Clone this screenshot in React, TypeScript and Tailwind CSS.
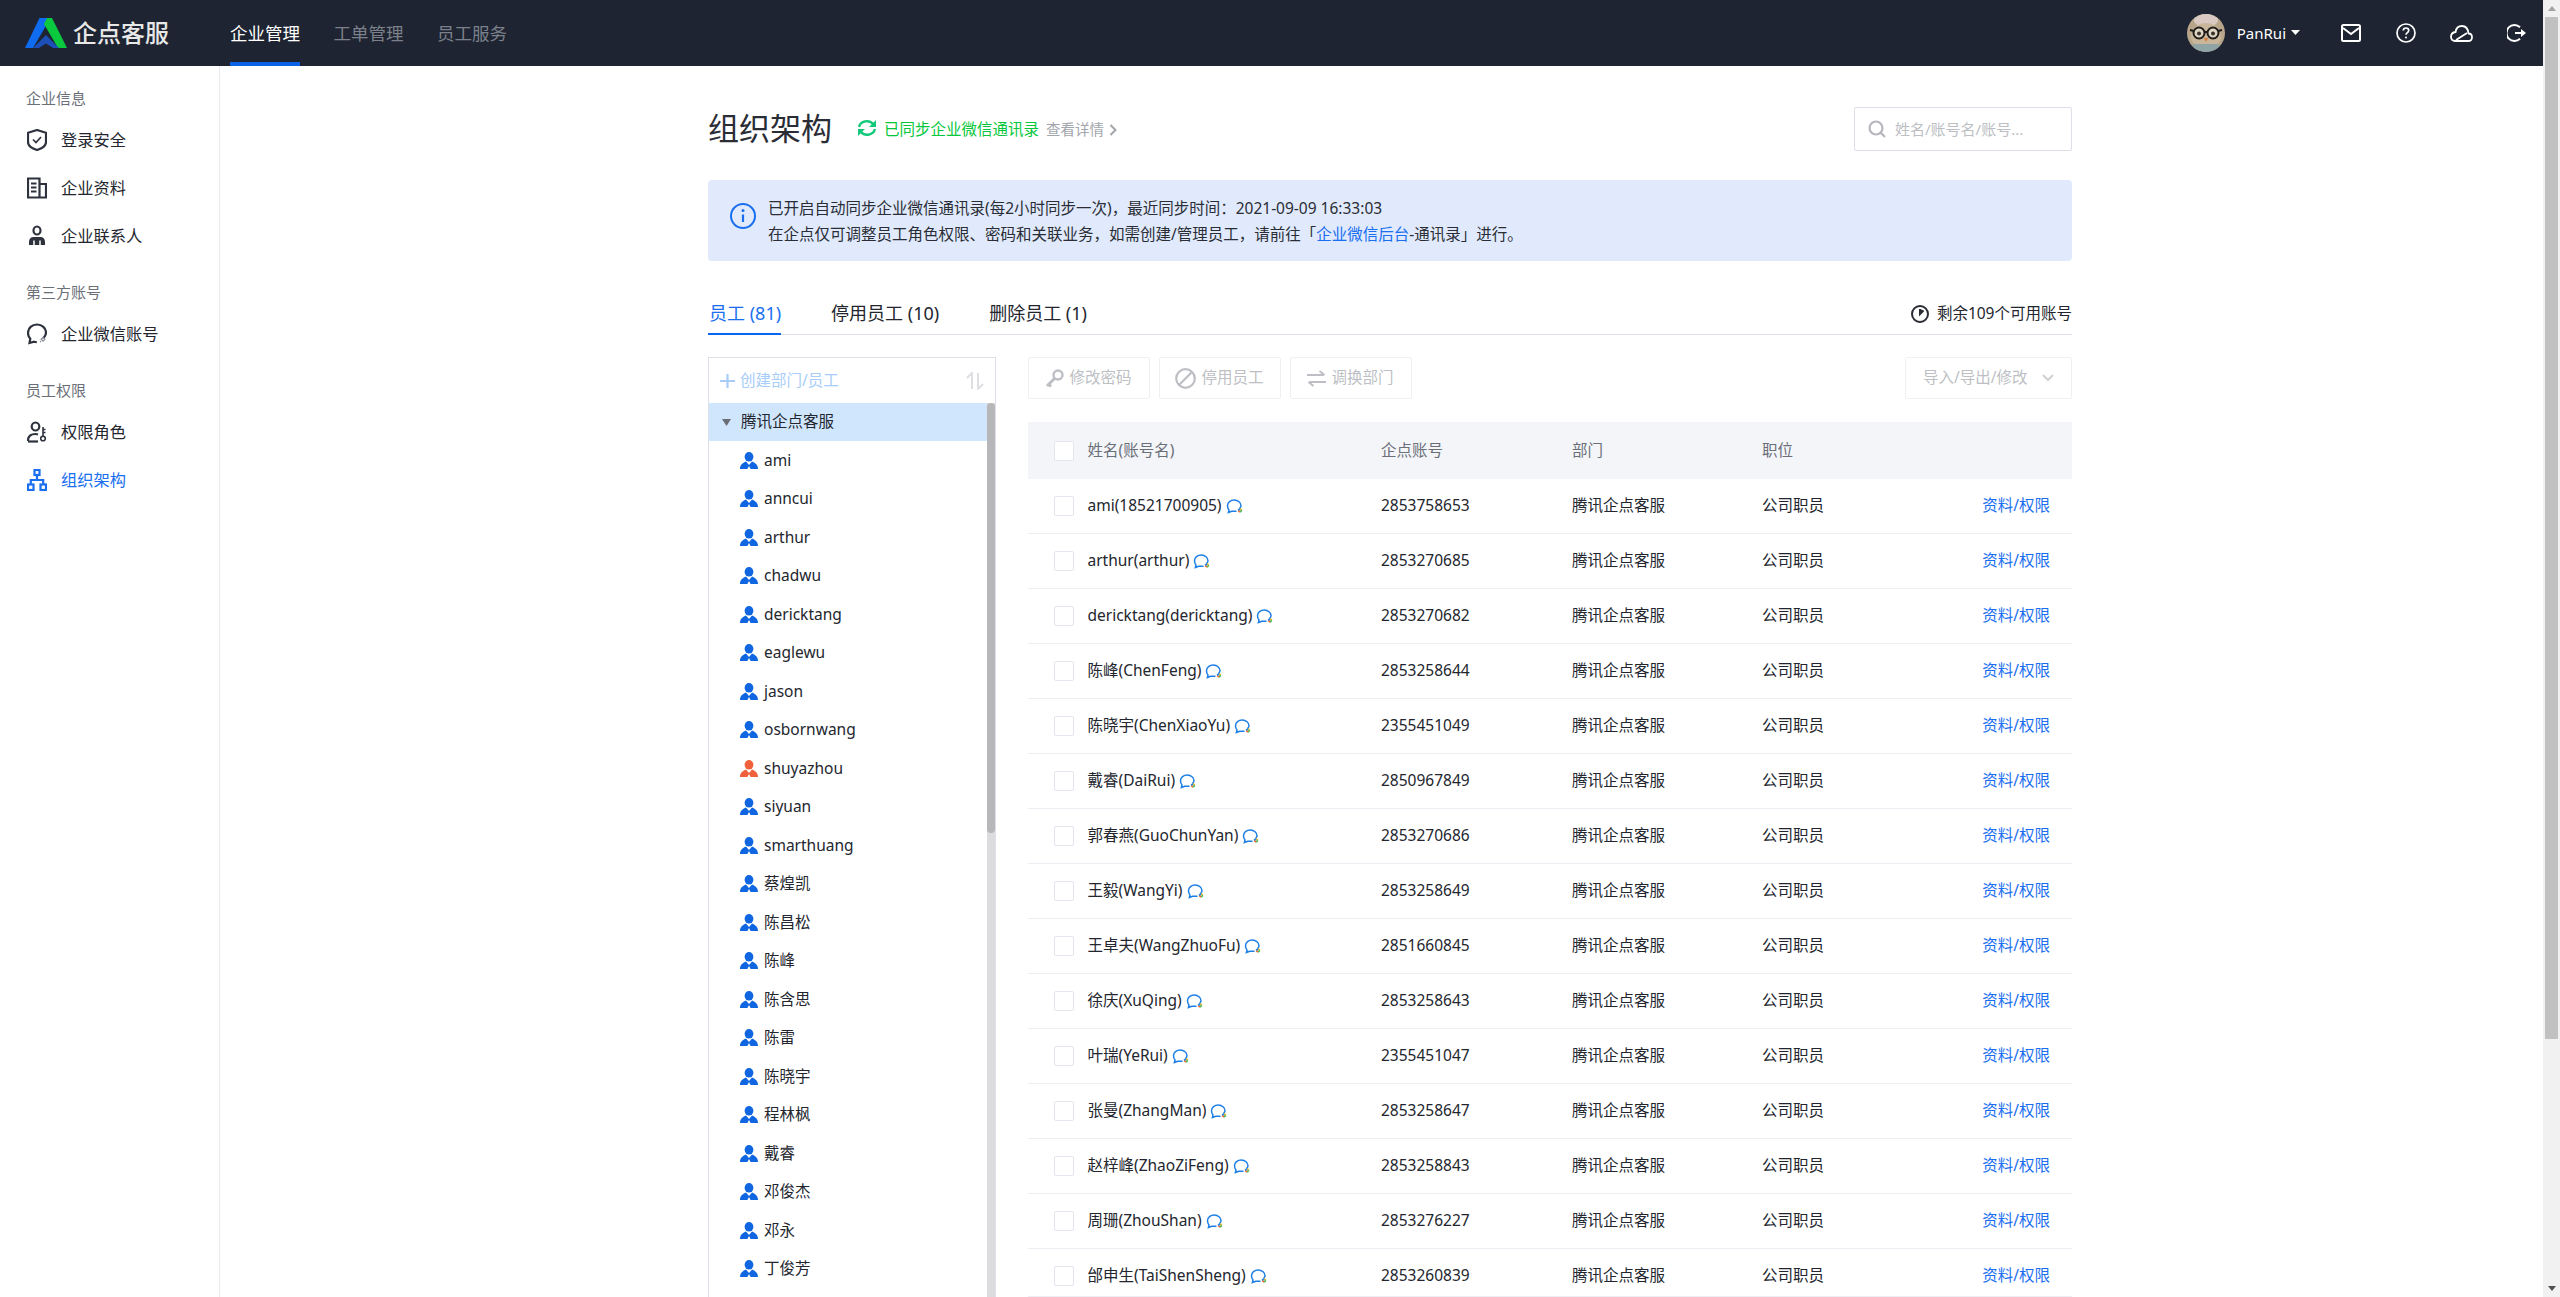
import React from "react";

const rows: [string, string][] = [
  ["ami(18521700905)", "2853758653"],
  ["arthur(arthur)", "2853270685"],
  ["dericktang(dericktang)", "2853270682"],
  ["陈峰(ChenFeng)", "2853258644"],
  ["陈晓宇(ChenXiaoYu)", "2355451049"],
  ["戴睿(DaiRui)", "2850967849"],
  ["郭春燕(GuoChunYan)", "2853270686"],
  ["王毅(WangYi)", "2853258649"],
  ["王卓夫(WangZhuoFu)", "2851660845"],
  ["徐庆(XuQing)", "2853258643"],
  ["叶瑞(YeRui)", "2355451047"],
  ["张曼(ZhangMan)", "2853258647"],
  ["赵梓峰(ZhaoZiFeng)", "2853258843"],
  ["周珊(ZhouShan)", "2853276227"],
  ["邰申生(TaiShenSheng)", "2853260839"],
];

const tree = ["ami","anncui","arthur","chadwu","dericktang","eaglewu","jason","osbornwang","shuyazhou","siyuan","smarthuang","蔡煌凯","陈昌松","陈峰","陈含思","陈雷","陈晓宇","程林枫","戴睿","邓俊杰","邓永","丁俊芳"];

function Logo() {
  return (
    <svg width="42" height="30" viewBox="0 0 42 30">
      <polygon points="14.5,0 22,0 22,6 8,30 0,30" fill="#0f6bf0" />
      <polygon points="22,0 27,0 42,30 33,30 19,6" fill="#0ac93e" />
      <polygon points="8,30 21,17 34,30 28,30 21,25.5 14,30" fill="#1c4fb8" />
    </svg>
  );
}

function Avatar() {
  return (
    <svg width="38" height="38" viewBox="0 0 38 38">
      <defs>
        <clipPath id="av"><circle cx="19" cy="19" r="19" /></clipPath>
      </defs>
      <g clipPath="url(#av)">
        <rect width="38" height="38" fill="#b8a68a" />
        <ellipse cx="19" cy="6" rx="12" ry="7" fill="#d9c9c2" />
        <ellipse cx="19" cy="22" rx="15" ry="13" fill="#c9b69a" />
        <rect x="6" y="30" width="26" height="8" fill="#8fa5a5" />
        <circle cx="12" cy="19" r="5.5" fill="#e0d6c4" stroke="#1f1c1a" strokeWidth="2" />
        <circle cx="26" cy="19" r="5.5" fill="#e0d6c4" stroke="#1f1c1a" strokeWidth="2" />
        <path d="M17 18h4M3 16l4 1M35 16l-4 1" stroke="#1f1c1a" strokeWidth="2" />
        <circle cx="12" cy="19.5" r="2" fill="#3a332c" />
        <circle cx="26" cy="19.5" r="2" fill="#3a332c" />
        <polygon points="17,24 21,24 19,28" fill="#d9743a" />
      </g>
    </svg>
  );
}

function Person({ color = "#0f66e0" }: { color?: string }) {
  return (
    <svg width="18" height="17" viewBox="0 0 18 17" className="shrink-0">
      <ellipse cx="9" cy="4.8" rx="4.4" ry="4.8" fill={color} />
      <path d="M0 17c0-4 2.500-6 6-7.500L9 13l3-3.500c3.500 1.500 6 3.500 6 7.500h-7.400L9 14l-1.600 3z" fill={color} />
    </svg>
  );
}

function WeCom() {
  return (
    <svg width="18" height="15" viewBox="0 0 18 15" className="shrink-0 ml-[4px]">
      <path d="M13.600 9.500C14.400 8.600 15 7.800 15 6.800c0-3.200-3-5.800-6.700-5.800S1.500 3.500 1.500 6.800c0 1.600.5 3.100 1.500 4.200l-.6 2.500 3.300-1.200h4.800" fill="none" stroke="#1d7fe6" strokeWidth="1.500" />
      <path d="M14 9.500l1.800 1.800" stroke="#f2b822" strokeWidth="1.700" />
      <path d="M15.800 11.300l-1.800 1.800" stroke="#3ec45a" strokeWidth="1.700" />
      <path d="M14 13.100l-1.800-1.800" stroke="#ef6a2c" strokeWidth="1.700" />
      <path d="M12.200 11.300l1.800-1.800" stroke="#1d7fe6" strokeWidth="1.700" />
    </svg>
  );
}

function SideIcon({ name, active }: { name: string; active?: boolean }) {
  const c = active ? "#1a6ff0" : "#2d323c";
  const common = { width: 20, height: 22, viewBox: "0 0 20 22", fill: "none", stroke: c, strokeWidth: 2.2 } as const;
  if (name === "shield")
    return (
      <svg {...common}>
        <path d="M10 1l9 2.800V13c0 3.800-4.500 6.600-9 8-4.500-1.400-9-4.200-9-8V3.800z" />
        <path d="M6 10.500l3 3 5-5.500" strokeWidth="1.700" />
      </svg>
    );
  if (name === "doc")
    return (
      <svg {...common}>
        <path d="M1 1.500h11.500V20.500H1zM12.500 7H19V20.500H12.500" />
        <path d="M4 6.500h5.500M4 10.500h5.500M4 14.500h5.500" strokeWidth="1.800" />
      </svg>
    );
  if (name === "contact")
    return (
      <svg {...common}>
        <ellipse cx="10" cy="5.500" rx="3.500" ry="4" />
        <path d="M2 20v-3.500c0-2.500 2-4.500 4.500-4.500h7c2.500 0 4.500 2 4.500 4.500V20z" fill={c} stroke="none" />
        <path d="M7 15.500V20M13 15.500V20" stroke="#fff" strokeWidth="1.500" />
      </svg>
    );
  if (name === "chat")
    return (
      <svg {...common}>
        <path d="M16.500 15C18 13.500 19 11.500 19 9.500 19 5 15 1.500 10 1.500S1 5 1 10c0 2.300 1 4.300 2.300 5.800L2.500 20l4.500-1.300c1 .3 1.800.4 2.800.4" />
        <path d="M16 14.500l1.800 1.800-1.800 1.800-1.800-1.800z" stroke="#8a8f98" strokeWidth="1.300" />
        <path d="M13 18.500h1" stroke="#8a8f98" strokeWidth="1.300" />
      </svg>
    );
  if (name === "role")
    return (
      <svg {...common}>
        <ellipse cx="8.500" cy="5.500" rx="3.800" ry="4" />
        <path d="M1 20c0-4.500 3-7 7.500-7 1 0 1.800.1 2.500.4" />
        <path d="M1 20.500h10" />
        <circle cx="16" cy="17.500" r="2.300" strokeWidth="1.600" />
        <path d="M16 15V6M16 8.500h2.500M16 11.500h2.500" strokeWidth="1.600" />
      </svg>
    );
  return (
    <svg {...common}>
      <rect x="7.500" y="1" width="5" height="5" />
      <rect x="1" y="15.500" width="5.500" height="5.500" />
      <rect x="13.500" y="15.500" width="5.500" height="5.500" />
      <path d="M10 6v5M3.800 15.500V11h12.400v4.500" />
    </svg>
  );
}

function Section({ title, items }: { title: string; items: [string, string, boolean?][] }) {
  return (
    <div className="mb-[21px]">
      <div className="h-6 mb-[5px] pl-[26px] pb-[2px] flex items-center text-[15px] text-[#6b6f78]">{title}</div>
      {items.map(([icon, label, active]) => (
        <div key={label} className="h-12 pl-[27px] flex items-center gap-[14px]">
          <SideIcon name={icon} active={active} />
          <span className={`text-[16.25px] ${active ? "text-[#1a6ff0]" : "text-[#23262e]"}`}>{label}</span>
        </div>
      ))}
    </div>
  );
}

function ToolButton({ icon, label }: { icon: React.ReactNode; label: string }) {
  return (
    <div className="w-[122px] h-[42px] border border-[#eef0f4] rounded-[2px] flex items-center justify-center gap-[5px] text-[15.5px] text-[#bdbfc4]">
      {icon}
      <span>{label}</span>
    </div>
  );
}

export default function App() {
  return (
    <div className="flex h-screen overflow-hidden bg-white font-['Noto_Sans','Noto_Sans_CJK_SC',sans-serif] text-[#23262e]">
      <div className="flex-1 min-w-0 flex flex-col">
        <header className="h-[66px] shrink-0 bg-[#1e2431] flex items-center pl-[25px]">
          <Logo />
          <span className="ml-[6px] w-[96px] text-[24px] font-medium text-[#e8e8e8] whitespace-nowrap leading-none">企点客服</span>
          <nav className="ml-[61px] flex h-full gap-[33.5px] text-[17.5px]">
            <div className="h-full pt-1 flex items-center border-b-4 border-[#0a62e6] text-white">企业管理</div>
            <div className="h-full pt-1 flex items-center border-b-4 border-transparent text-[#7b808b]">工单管理</div>
            <div className="h-full pt-1 flex items-center border-b-4 border-transparent text-[#7b808b]">员工服务</div>
          </nav>
          <div className="ml-auto flex items-center pr-[17px] text-white">
            <Avatar />
            <span className="ml-[12px] text-[15px]">PanRui</span>
            <svg width="9" height="5" viewBox="0 0 9 5" className="ml-[5px] mb-[2px]"><polygon points="0,0 9,0 4.500,5" fill="#fff" /></svg>
            <svg width="20" height="18" viewBox="0 0 20 18" fill="none" stroke="#fff" strokeWidth="2" className="ml-[41px]">
              <rect x="1" y="1" width="18" height="16" rx="1.500" />
              <path d="M2 4l8 6 8-6" />
            </svg>
            <svg width="20" height="20" viewBox="0 0 20 20" fill="none" stroke="#fff" strokeWidth="1.700" className="ml-[35px]">
              <circle cx="10" cy="10" r="9" />
              <path d="M7.300 7.600c0-1.600 1.200-2.600 2.700-2.600s2.700 1 2.700 2.400c0 2.100-2.700 2.200-2.700 4.300" />
              <circle cx="10" cy="14.500" r="1" fill="#fff" stroke="none" />
            </svg>
            <svg width="23" height="17" viewBox="0 0 23 17" fill="none" stroke="#fff" strokeWidth="1.800" className="ml-[34px]">
              <path d="M5 16h13c2.500 0 4-1.700 4-3.800 0-2-1.500-3.600-3.500-3.700C18 4 15.500 1 12 1 8.500 1 6 3.500 5.600 7 3 7.300 1 9.300 1 11.800 1 14.200 2.700 16 5 16z" />
              <path d="M6 15L17 8" />
            </svg>
            <svg width="19" height="18" viewBox="0 0 19 18" fill="none" stroke="#fff" strokeWidth="2" className="ml-[34px]">
              <path d="M13 3.200A8 8 0 1 0 13 14.800" />
              <path d="M8 9h8" />
              <polygon points="14,5 19,9 14,13" fill="#fff" stroke="none" />
            </svg>
          </div>
        </header>
        <div className="flex-1 min-h-0 flex">
          <aside className="w-[220px] shrink-0 border-r border-[#e8eaef] pt-[21px]">
            <Section title="企业信息" items={[["shield", "登录安全"], ["doc", "企业资料"], ["contact", "企业联系人"]]} />
            <Section title="第三方账号" items={[["chat", "企业微信账号"]]} />
            <Section title="员工权限" items={[["role", "权限角色"], ["org", "组织架构", true]]} />
          </aside>
          <main className="flex-1 min-w-0 pl-[488px] pt-[41px] overflow-hidden">
            <div className="w-[1364px]">
              <div className="h-11 flex items-center">
                <h1 className="text-[31px] font-normal leading-none text-[#2a2d35] -mt-[2px]">组织架构</h1>
                <svg width="20" height="18" viewBox="0 0 20 18" fill="none" stroke="#12c97a" strokeWidth="2.400" className="ml-[25px] mb-[2px]">
                  <path d="M2 8A8 7.500 0 0 1 16 5" />
                  <path d="M18 10A8 7.500 0 0 1 4 13" />
                  <polygon points="19,1 19,8 12,8" fill="#12c97a" stroke="none" />
                  <polygon points="1,17 1,10 8,10" fill="#12c97a" stroke="none" />
                </svg>
                <span className="ml-[7px] text-[15.5px] text-[#06c73c] mt-[2px]">已同步企业微信通讯录</span>
                <span className="ml-[7px] text-[14.5px] text-[#a2a5ab] mt-[2px]">查看详情</span>
                <svg width="8" height="12" viewBox="0 0 8 12" fill="none" stroke="#a2a5ab" strokeWidth="2" className="ml-[5px] mt-[2px]">
                  <path d="M1.500 1l5 5-5 5" />
                </svg>
                <div className="ml-auto w-[218px] h-11 border border-[#dcdfe7] rounded-[2px] flex items-center pl-[13px] text-[15px] text-[#bcbec4]">
                  <svg width="18" height="18" viewBox="0 0 18 18" fill="none" stroke="#b5b7bd" strokeWidth="2.200" className="shrink-0">
                    <circle cx="8" cy="8" r="6.500" />
                    <path d="M12.500 12.500L17 17" />
                  </svg>
                  <span className="ml-[9px]">姓名/账号名/账号...</span>
                </div>
              </div>

              <div className="mt-[29px] h-[81px] rounded-[4px] bg-[#e0eafc] flex items-center pl-[22px] text-[15.5px] leading-[26px] text-[#2a2d35]">
                <svg width="26" height="26" viewBox="0 0 26 26" fill="none" stroke="#1a6ff0" strokeWidth="2" className="shrink-0 -mt-[10px]">
                  <circle cx="13" cy="13" r="12" />
                  <path d="M13 11.500V19" strokeWidth="2.200" />
                  <circle cx="13" cy="7.500" r="1.500" fill="#1a6ff0" stroke="none" />
                </svg>
                <div className="ml-[12px]">
                  <div>已开启自动同步企业微信通讯录(每2小时同步一次)，最近同步时间：2021-09-09 16:33:03</div>
                  <div>在企点仅可调整员工角色权限、密码和关联业务，如需创建/管理员工，请前往「<span className="text-[#1a6ff0]">企业微信后台</span>-通讯录」进行。</div>
                </div>
              </div>

              <div className="mt-[32px] h-[42px] border-b border-[#dfe3ec] flex items-stretch gap-[50px] text-[18px]">
                <div className="pl-[1px] -mb-px border-b-2 border-[#0a66f0] text-[#1a6ff0] flex items-center">员工 (81)</div>
                <div className="flex items-center">停用员工 (10)</div>
                <div className="flex items-center">删除员工 (1)</div>
                <div className="ml-auto flex items-center text-[15.5px]">
                  <svg width="18" height="18" viewBox="0 0 18 18" fill="none" stroke="#2a2d35" strokeWidth="2" className="mr-[8px]">
                    <circle cx="9" cy="9" r="8" />
                    <path d="M9 4v5l3.500-3.500" fill="#2a2d35" />
                  </svg>
                  剩余109个可用账号
                </div>
              </div>

              <div className="mt-[22px] flex gap-[31.500px]">
                <div className="w-[288px] shrink-0 h-[960px] border border-[#dde1ea] flex flex-col overflow-hidden">
                  <div className="h-[45px] shrink-0 flex items-center pl-[11px] pr-[11px] text-[15.5px] text-[#a8cdf9]">
                    <svg width="15" height="14" viewBox="0 0 15 14" stroke="#a8cdf9" strokeWidth="2.200"><path d="M7.500 0v14M0 7h15" /></svg>
                    <span className="ml-[5px]">创建部门/员工</span>
                    <svg width="18" height="18" viewBox="0 0 18 18" fill="none" stroke="#dedfe3" strokeWidth="2" className="ml-auto">
                      <path d="M6 17V1L1 6M12 1v16l5-5" />
                    </svg>
                  </div>
                  <div className="flex-1 min-h-0 flex">
                    <div className="flex-1 min-w-0 text-[15.5px]">
                      <div className="h-[38px] bg-[#d0e6fd] flex items-center pl-[13px]">
                        <svg width="9" height="7" viewBox="0 0 9 7"><polygon points="0,0 9,0 4.500,7" fill="#6b6e75" /></svg>
                        <span className="ml-[10px]">腾讯企点客服</span>
                      </div>
                      {tree.map((n) => (
                        <div key={n} className="h-[38.500px] flex items-center pl-[31px] gap-[6px]">
                          <Person color={n === "shuyazhou" ? "#f0603c" : "#0f66e0"} />
                          <span>{n}</span>
                        </div>
                      ))}
                    </div>
                    <div className="w-2 shrink-0 bg-[#dcdcdf]">
                      <div className="h-[430px] bg-[#b7b7b9] rounded-[4px]" />
                    </div>
                  </div>
                </div>

                <div className="flex-1 min-w-0">
                  <div className="flex gap-[9px]">
                    <ToolButton
                      label="修改密码"
                      icon={
                        <svg width="19" height="19" viewBox="0 0 19 19" fill="none" stroke="#bdbfc4" strokeWidth="2.400">
                          <circle cx="13" cy="6" r="4.500" />
                          <path d="M9.500 9.500L2 17M3.500 15l2.500 2.500" strokeWidth="3" />
                        </svg>
                      }
                    />
                    <ToolButton
                      label="停用员工"
                      icon={
                        <svg width="21" height="21" viewBox="0 0 21 21" fill="none" stroke="#bdbfc4" strokeWidth="2.200">
                          <circle cx="10.500" cy="10.500" r="9.300" />
                          <path d="M4 17L17 4" />
                        </svg>
                      }
                    />
                    <ToolButton
                      label="调换部门"
                      icon={
                        <svg width="19" height="17" viewBox="0 0 19 17" fill="none" stroke="#bdbfc4" strokeWidth="2">
                          <path d="M0 5h17M12.500 1l5 4M19 12H2M6.500 16l-5-4" />
                        </svg>
                      }
                    />
                    <div className="ml-auto w-[167px] h-[42px] border border-[#eef0f4] rounded-[2px] flex items-center pl-[17px] text-[15.5px] text-[#bdbfc4] whitespace-nowrap">
                      导入/导出/修改
                      <svg width="12" height="8" viewBox="0 0 12 8" fill="none" stroke="#cfd1d5" strokeWidth="2" className="ml-[14px]"><path d="M1 1l5 5 5-5" /></svg>
                    </div>
                  </div>

                  <div className="mt-[23px] h-[57px] bg-[#f3f5f9] grid grid-cols-[60px_293.500px_191px_190px_1fr] items-center text-[15.5px] text-[#6b6f78]">
                    <div className="ml-[26px] w-5 h-5 border border-[#e3e6ee] rounded-[2px] bg-white" />
                    <div>姓名(账号名)</div>
                    <div>企点账号</div>
                    <div>部门</div>
                    <div>职位</div>
                  </div>

                  {rows.map(([name, acct], i) => (
                    <div key={acct} className={`${i === rows.length - 1 ? "h-[48px]" : "h-[55px]"} overflow-hidden border-b border-[#eceef3]`}>
                      <div className="h-[54px] grid grid-cols-[60px_293.500px_191px_190px_1fr] items-center text-[15.5px]">
                        <div className="ml-[26px] w-5 h-5 border border-[#e3e6ee] rounded-[2px]" />
                        <div className="flex items-center">
                          <span>{name}</span>
                          <WeCom />
                        </div>
                        <div>{acct}</div>
                        <div>腾讯企点客服</div>
                        <div className="flex justify-between pr-[22px]">
                          <span>公司职员</span>
                          <span className="text-[#1a6ff0]">资料/权限</span>
                        </div>
                      </div>
                    </div>
                  ))}
                </div>
              </div>
            </div>
          </main>
        </div>
      </div>
      <div className="w-[17px] shrink-0 bg-[#f1f1f1] flex flex-col">
        <div className="h-[17px] flex items-center justify-center">
          <svg width="8" height="5" viewBox="0 0 8 5"><polygon points="0,5 8,5 4,0" fill="#a3a3a3" /></svg>
        </div>
        <div className="ml-[2px] w-[13px] h-[1022px] bg-[#c1c1c1]" />
        <div className="mt-auto h-[17px] flex items-center justify-center">
          <svg width="8" height="5" viewBox="0 0 8 5"><polygon points="0,0 8,0 4,5" fill="#505050" /></svg>
        </div>
      </div>
    </div>
  );
}
